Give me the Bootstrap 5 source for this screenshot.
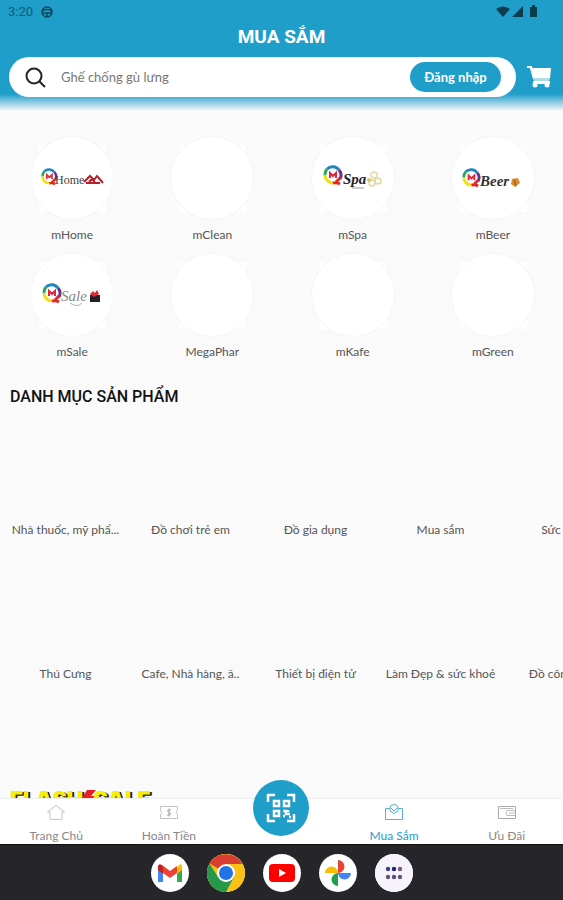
<!DOCTYPE html>
<html lang="vi">
<head>
<meta charset="utf-8">
<meta name="viewport" content="width=device-width, initial-scale=1">
<title>Mua sắm</title>
<link href="https://cdn.jsdelivr.net/npm/bootstrap@5.3.0/dist/css/bootstrap.min.css" rel="stylesheet">
<style>
:root { --brand: #209eca; --page: #fafafa; }
body { background: var(--page); font-family: Lato, "Open Sans", sans-serif; font-size: 12px; line-height: 16px; color: #555; }
.app-head { background: linear-gradient(to bottom, var(--brand) 0, var(--brand) calc(100% - 17px), var(--page) 100%); padding-bottom: 14px; }
.status-bar { height: 24px; font: 13px/24px Roboto, sans-serif; color: #125a76; padding: 0 24px 0 8px; }
.page-title { font: 700 19px/26px Roboto, sans-serif; margin-bottom: 7px; }
.search-row { padding: 0 11px 0 9px; gap: 10px; }
.search-pill { height: 40px; padding: 0 15px 0 16px; gap: 15px; }
.search-pill input { font-size: 13px; color: #777; min-width: 0; outline: 0; }
.search-pill input::placeholder { color: #777; opacity: 1; }
.login-btn { background: var(--brand); height: 30px; width: 91px; font-size: 13px; line-height: 18px; font-weight: 700; }
.shops { padding: 25px 0 0 2px; row-gap: 10px; }
.shops a { color: #555; text-decoration: none; gap: 7px; }
.section-title { font: 500 16px/20px Roboto, sans-serif; color: #111; margin: 27px 0 0 10px; }
.cats { display: grid; grid-auto-flow: column; grid-template-rows: auto auto; grid-auto-columns: 125px; row-gap: 13px; padding-left: 3px; overflow: hidden; }
.cats a { display: flex; flex-direction: column; color: #555; text-decoration: none; text-align: center; white-space: nowrap; }
.cat-pic { height: 115px; }
.flash { font: 900 22px/24px Inter, sans-serif; color: #f6ee08; text-shadow: 1px 1px 0 #222, 2px 1px 0 #222; margin: 105px 0 0 10px; }
.flash svg { margin: 0 -3px; vertical-align: top; }
.tabs { background: #fff; border-top: 1px solid #eee; height: 46px; }
.tabs a { flex: 1 1 0; color: #888; text-decoration: none; padding-top: 4px; gap: 5px; }
.tabs a.current { color: var(--brand); }
.scan-btn { width: 56px; height: 56px; background: var(--brand); margin-top: -19px; }
.scan-slot { flex: 1 1 0; }
.dock { background: #26262a; border-top: 1px solid #111; height: 56px; gap: 18px; }
.dock button { width: 38px; height: 38px; background: #fff; }
.dock svg { display: block; }
svg text { font-family: "Liberation Serif", serif; }
</style>
<script src="https://cdn.jsdelivr.net/npm/bootstrap@5.3.0/dist/js/bootstrap.bundle.min.js"></script>
</head>
<body class="vh-100 d-flex flex-column overflow-hidden">
<svg width="0" height="0" class="position-absolute" aria-hidden="true">
  <defs>
    <g id="plate"><path fill="#fff" d="M9 9H76V76H9z"/><circle cx="42" cy="42" r="41.500" fill="#fff" stroke="#f5f5f5"/></g>
    <g id="ring" fill="none" stroke-width="3">
      <path d="M5 4A8 8 0 0 1 17 5" stroke="#2187bd"/><path d="M17 5A8 8 0 0 1 18 14" stroke="#6c3289"/>
      <path d="M5 4A8 8 0 0 0 3 10" stroke="#2ba65a"/><path d="M3 10A8 8 0 0 0 11 18" stroke="#f3df12"/>
      <path d="M11 18Q15 17 18 19M18 13L14 17" stroke="#e22726"/>
      <path d="M8 13V8L11 11L14 8V13" stroke="#e0263a" stroke-width="2"/>
    </g>
  </defs>
</svg>

<header class="app-head flex-shrink-0">
  <div class="status-bar d-flex align-items-center justify-content-between">
    <span class="d-flex align-items-center gap-2">3:20
      <svg width="12" height="12" viewBox="0 0 12 12" fill="none" stroke="#0d465c" stroke-width="1.500"><circle cx="6" cy="6" r="5"/><path d="M1 5Q6 2 11 5M2 7H10M6 7V11"/></svg>
    </span>
    <svg width="43" height="14" viewBox="0 0 43 14" fill="#0c3c50"><path d="M0 4Q7-1 14 4L7 12zM16 12L27 1V12zM34 2H36V0H39V2H41V12H34z"/></svg>
  </div>
  <h1 class="page-title text-white text-center">MUA SẮM</h1>
  <div class="search-row d-flex align-items-center">
    <form class="search-pill flex-grow-1 d-flex align-items-center bg-white rounded-pill">
      <svg class="flex-shrink-0" width="21" height="21" viewBox="0 0 21 21" fill="none" stroke="#222" stroke-width="2"><circle cx="9" cy="9" r="7.500"/><path d="M14 14L20 20"/></svg>
      <input class="flex-grow-1 border-0 p-0 bg-transparent" type="text" aria-label="Tìm kiếm" placeholder="Ghế chống gù lưng">
      <button type="button" class="login-btn btn rounded-pill border-0 p-0 text-white flex-shrink-0">Đăng nhập</button>
    </form>
    <button type="button" class="btn border-0 p-0 flex-shrink-0" aria-label="Giỏ hàng">
      <svg class="d-block" width="26" height="24" viewBox="0 0 26 24"><path d="M1 2H5L9 15H22" fill="none" stroke="#fff" stroke-width="2"/><path d="M4 3H25L24 14H7z" fill="#fff"/><path d="M7 13H24L23 16H8z" fill="#b3d9e9"/><path d="M7 16H24V19H7z" fill="#fff"/><circle cx="9" cy="20" r="2.500" fill="#fff"/><circle cx="21" cy="20" r="2.500" fill="#fff"/></svg>
    </button>
  </div>
</header>

<main class="flex-grow-1 overflow-hidden">
  <nav class="shops row row-cols-4 g-0" aria-label="Cửa hàng">
    <a href="#" class="col d-flex flex-column align-items-center"><svg width="84" height="84"><use href="#plate"/><use href="#ring" transform="translate(10 32) scale(.85)"/><text x="25" y="48" font-size="12" fill="#444">Home</text><path d="M54 46L60 40L64 44L67 40L73 47M56 47H70M59 46L62 43L65 46" fill="none" stroke="#b7202c" stroke-width="2"/></svg>mHome</a>
    <a href="#" class="col d-flex flex-column align-items-center"><svg width="84" height="84"><use href="#plate"/></svg>mClean</a>
    <a href="#" class="col d-flex flex-column align-items-center"><svg width="84" height="84"><use href="#plate"/><use href="#ring" transform="translate(11 29)"/><text x="32" y="48" font-size="15" font-style="italic" fill="#222" font-weight="bold">Spa</text><path d="M41 52H53" stroke="#999"/><g fill="none" stroke="#e3d8a3" stroke-width="1.500"><circle cx="63" cy="39" r="3"/><circle cx="67" cy="45" r="3"/><circle cx="61" cy="47" r="3"/></g><circle cx="58" cy="44" r="2" fill="#d9c66c"/></svg>mSpa</a>
    <a href="#" class="col d-flex flex-column align-items-center"><svg width="84" height="84"><use href="#plate"/><use href="#ring" transform="translate(10 32) scale(.95)"/><text x="29" y="50" font-size="15" font-style="italic" fill="#333" font-weight="bold">Beer</text><path d="M61 43L67 42L69 47L64 51L60 48z" fill="#dd8b27"/><path d="M63 43L65 50" stroke="#8f5a21"/></svg>mBeer</a>
    <a href="#" class="col d-flex flex-column align-items-center"><svg width="84" height="84"><use href="#plate"/><use href="#ring" transform="translate(11 30)"/><text x="31" y="48" font-size="15" font-style="italic" fill="#888">Sale</text><path d="M40 50Q47 55 52 50" fill="none" stroke="#aaa"/><path d="M60 42H70V49H60z" fill="#222"/><path d="M60 41L63 38L65 40L67 37L69 41L64 44z" fill="#e22632"/></svg>mSale</a>
    <a href="#" class="col d-flex flex-column align-items-center"><svg width="84" height="84"><use href="#plate"/></svg>MegaPhar</a>
    <a href="#" class="col d-flex flex-column align-items-center"><svg width="84" height="84"><use href="#plate"/></svg>mKafe</a>
    <a href="#" class="col d-flex flex-column align-items-center"><svg width="84" height="84"><use href="#plate"/></svg>mGreen</a>
  </nav>
  <h2 class="section-title">DANH MỤC SẢN PHẨM</h2>
  <nav class="cats" aria-label="Danh mục sản phẩm">
    <a href="#"><span class="cat-pic"></span>Nhà thuốc, mỹ phẩ...</a>
    <a href="#"><span class="cat-pic"></span>Thú Cưng</a>
    <a href="#"><span class="cat-pic"></span>Đồ chơi trẻ em</a>
    <a href="#"><span class="cat-pic"></span>Cafe, Nhà hàng, ă..</a>
    <a href="#"><span class="cat-pic"></span>Đồ gia dụng</a>
    <a href="#"><span class="cat-pic"></span>Thiết bị điện tử</a>
    <a href="#"><span class="cat-pic"></span>Mua sắm</a>
    <a href="#"><span class="cat-pic"></span>Làm Đẹp &amp; sức khoẻ</a>
    <a href="#"><span class="cat-pic"></span>Sức khoẻ</a>
    <a href="#"><span class="cat-pic"></span>Đồ công nghệ</a>
  </nav>
  <h2 class="flash">FLASH<svg width="16" height="24" viewBox="0 0 16 24"><path d="M7 3H16L11 9H15L3 23L6 13H1z" fill="#ee1c24"/></svg>SALE</h2>
</main>

<nav class="tabs d-flex flex-shrink-0" aria-label="Điều hướng">
  <a href="#" class="d-flex flex-column align-items-center"><svg width="20" height="20" viewBox="0 0 20 20" fill="none" stroke="#c4c4c4"><path d="M1.500 9L10 2.500L18.500 9H16V16.500H4V9z"/></svg>Trang Chủ</a>
  <a href="#" class="d-flex flex-column align-items-center"><svg width="20" height="20" viewBox="0 0 20 20" fill="none" stroke="#c4c4c4"><path d="M1.500 3.500H18.500V7Q16 9.500 18.500 12V15.500H1.500V12Q4 9.500 1.500 7z"/><path d="M12 7H9Q8 9 10 9.500Q13 10 11 12H8M10 5.500V13.500" stroke="#aaa"/></svg>Hoàn Tiền</a>
  <div class="scan-slot d-flex justify-content-center">
    <button type="button" class="scan-btn btn rounded-circle border-0 p-0 d-flex align-items-center justify-content-center" aria-label="Quét mã QR">
      <svg width="30" height="30" viewBox="0 0 30 30" fill="none" stroke="#fff" stroke-width="2.500"><path d="M2 9V2H9M21 2H28V9M28 21V28H21M9 28H2V21"/><path d="M8 8H13V13H8zM18 8H23V13H18zM8 18H13V23H8z"/><path d="M17 18H20V21H24M22 17V19M17 23H19M23 24H25" /></svg>
    </button>
  </div>
  <a href="#" class="current d-flex flex-column align-items-center" aria-current="page"><svg width="20" height="20" viewBox="0 0 20 20" fill="none" stroke="#58b1d2"><path d="M1.500 5.500V16.500H18.500V5.500H14M6 5.500H1.500"/><path d="M6 8V5Q6 1.500 10 1.500T14 5V8L10 10.500zM7 5L10 8L13 5"/></svg>Mua Sắm</a>
  <a href="#" class="d-flex flex-column align-items-center"><svg width="20" height="20" viewBox="0 0 20 20" fill="none" stroke="#aaa"><path d="M1.500 3.500H18.500V15.500H1.500z"/><path d="M18 7.500H10Q8 9.500 10 12.500H18M12 10H18M3 5.500H16" stroke="#bbb"/></svg>Ưu Đãi</a>
</nav>

<footer class="dock d-flex flex-shrink-0 align-items-center justify-content-center">
  <button type="button" class="btn rounded-circle border-0 p-0" aria-label="Gmail"><svg width="38" height="38" viewBox="0 0 38 38"><path d="M7 12V28H12V17z" fill="#4285f4"/><path d="M31 12V28H26V17z" fill="#34a853"/><path d="M26 14L28 11Q31 9 31 13V16L26 20z" fill="#fbbc04"/><path d="M7 13Q7 9 11 11L19 17L26 12V19L19 24L12 19L7 16z" fill="#ea4335"/><path d="M7 13V16L12 20V13L10 11Q7 10 7 13z" fill="#c5221f"/></svg></button>
  <button type="button" class="btn rounded-circle border-0 p-0" aria-label="Chrome"><svg width="38" height="38" viewBox="0 0 38 38"><circle cx="19" cy="19" r="19" fill="#fbc116"/><path d="M19 19L2.500 9.500A19 19 0 0 1 35.500 10H19z" fill="#dc3d31"/><path d="M2.500 9.500A19 19 0 0 0 19 38L27 23L19 19L11 23z" fill="#26984a"/><circle cx="19" cy="19" r="9" fill="#fff"/><circle cx="19" cy="19" r="7" fill="#2473e5"/></svg></button>
  <button type="button" class="btn rounded-circle border-0 p-0" aria-label="YouTube"><svg width="38" height="38" viewBox="0 0 38 38"><rect x="6" y="10" width="26" height="18" rx="4" fill="#f00"/><path d="M16 15L23 19L16 23z" fill="#fff"/></svg></button>
  <button type="button" class="btn rounded-circle border-0 p-0" aria-label="Google Photos"><svg width="38" height="38" viewBox="0 0 38 38"><path d="M19 19V6A6.500 6.500 0 0 1 19 19z" fill="#e64335"/><path d="M19 19H32A6.500 6.500 0 0 1 19 19z" fill="#4285f4"/><path d="M19 19V32A6.500 6.500 0 0 1 19 19z" fill="#249f4d"/><path d="M19 19H6A6.500 6.500 0 0 1 19 19z" fill="#fbbc04"/></svg></button>
  <button type="button" class="btn rounded-circle border-0 p-0" aria-label="Ứng dụng"><svg width="38" height="38" viewBox="0 0 38 38"><circle cx="19" cy="19" r="19" fill="#f6f3fc"/><g fill="#625773"><circle cx="13" cy="15" r="2.200" fill="#40407c"/><circle cx="19" cy="15" r="2.200" fill="#20208c"/><circle cx="25" cy="15" r="2.200" fill="#80596e"/><circle cx="13" cy="23" r="2.200"/><circle cx="19" cy="23" r="2.200" fill="#51508a"/><circle cx="25" cy="23" r="2.200"/></g></svg></button>
</footer>
</body>
</html>
